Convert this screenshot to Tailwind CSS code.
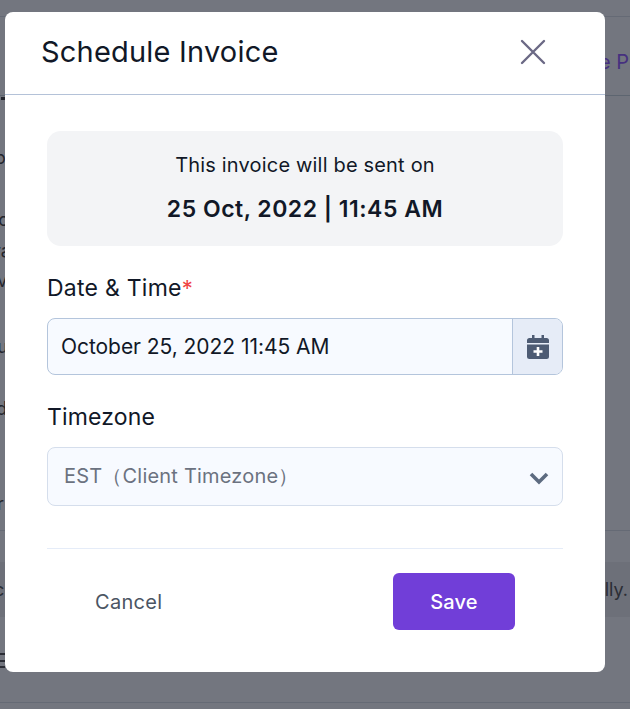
<!DOCTYPE html>
<html lang="en">
<head>
  <meta charset="UTF-8" />
  <title>Schedule Invoice</title>
  <script src="https://cdn.jsdelivr.net/npm/@tailwindcss/browser@4"></script>
</head>
<body class="relative h-[709px] w-[630px] overflow-hidden bg-[#73767f] font-['Inter',sans-serif]">
  <!-- page behind the overlay -->
  <div class="h-[709px] w-[630px] text-[18px] text-[#23252d]">
    <div class="h-[17px] border-b border-[#656a75]"></div>
    <div class="flex h-[79px] items-center justify-end border-b border-[#5d6570] pt-[12px] text-[20px] text-[#46307f]"><span class="mr-px">e P</span></div>
    <div class="relative">
      <i class="absolute left-px top-px h-[3px] w-[4px] bg-[#23252d]"></i>
      <span class="absolute -left-[5px] top-[48px]">oc</span>
      <span class="absolute -left-[6px] top-[110px]">lo</span>
      <span class="absolute -left-[6px] top-[141px]">ra</span>
      <span class="absolute -left-[7px] top-[171px]">iv</span>
      <span class="absolute -left-[7px] top-[237px]">iu</span>
      <span class="absolute -left-[8px] top-[299px]">id</span>
      <span class="absolute -left-[3px] top-[394px]">r</span>
    </div>
    <div class="h-[435px] border-b border-[#656a75]"></div>
    <div class="mt-[31px] flex h-[55px] items-center justify-between bg-[#6d7079] text-[#2b2d35]"><span class="-ml-[6px]">c</span><span class="mr-[2px]">lly.</span></div>
    <div class="mt-[36px] flex h-[15px] w-[5px] flex-col justify-between"><i class="h-[2px] bg-[#2b2d35]"></i><i class="h-[2px] bg-[#2b2d35]"></i><i class="h-[2px] bg-[#2b2d35]"></i></div>
    <div class="mt-[34px] border-b border-[#656a75]"></div>
  </div>

  <!-- modal -->
  <div class="absolute left-[5px] top-[12px] h-[660px] w-[600px] rounded-[8px] bg-white">
    <div class="flex h-[83px] items-center justify-between border-b border-[#b4c2d8] pb-[2px] pl-[36px] pr-[59px]">
      <h2 class="text-[29px] tracking-[0.2px] text-[#111827]">Schedule Invoice</h2>
      <svg class="h-[26px] w-[26px]" viewBox="0 0 26 26" fill="none" stroke="#6b6985" stroke-width="2.4" stroke-linecap="round"><path d="M2 2l22 22M24 2L2 24"/></svg>
    </div>
    <div class="px-[42px] pt-[36px]">
      <div class="flex h-[115px] flex-col items-center rounded-[14px] bg-[#f3f4f6] pt-[21px] text-[#111827]">
        <p class="text-[20px] leading-[26px] tracking-[0.18px]">This invoice will be sent on</p>
        <p class="mt-[17px] text-[23px] font-semibold leading-[28px] tracking-[0.5px]">25 Oct, 2022 | 11:45 AM</p>
      </div>
      <label class="mt-[27px] block h-[30px] text-[23px] leading-[30px] tracking-[0.25px] text-[#111827]">Date &amp; Time<span class="text-[22px] leading-none text-[#ef4444]">*</span></label>
      <div class="mt-[15px] flex h-[57px] overflow-hidden rounded-[8px] border border-[#b4c5dc] bg-[#f7faff]">
        <div class="flex flex-1 items-center pl-[13px] text-[21px] tracking-[-0.05px] text-[#111827]">October 25, 2022 11:45 AM</div>
        <div class="flex w-[50px] items-center justify-center border-l border-[#b4c5dc] bg-[#e6ecf7]">
          <svg class="h-[24px] w-[22px]" viewBox="0 0 22 24" fill="#4d5b73"><path d="M5 0h2.500v3h7V0H17v3h2.500A2.500 2.500 0 0 1 22 5.500V8H0V5.500A2.500 2.500 0 0 1 2.500 3H5zM0 9.500h22v12a2.500 2.500 0 0 1-2.500 2.500h-17A2.500 2.500 0 0 1 0 21.500z"/><path fill="#fff" d="M9.700 12h2.600v3.200h3.200v2.600h-3.200V21H9.700v-3.200H6.500v-2.600h3.200z"/></svg>
        </div>
      </div>
      <label class="mt-[27px] block h-[30px] text-[23px] leading-[30px] tracking-[0.15px] text-[#111827]">Timezone</label>
      <div class="mt-[15px] flex h-[59px] items-center justify-between rounded-[8px] border border-[#d5deec] bg-[#f7faff] pl-[16px] pr-[13px] text-[20px] text-[#6b7280]">
        <span class="-mt-[1px] tracking-[0.2px]">EST（Client Timezone）</span>
        <svg class="mt-[2px] h-[14px] w-[20px]" viewBox="0 0 20 14" fill="none" stroke="#5d6b80" stroke-width="3.600"><path d="M2 3l8 8 8-8"/></svg>
      </div>
      <div class="mt-[42px] border-t border-[#e5ecf8]"></div>
      <div class="mt-[24px] flex items-center justify-between pl-[48px] pr-[48px]">
        <button class="text-[20px] tracking-[0.3px] text-[#4b5563]">Cancel</button>
        <button class="h-[57px] w-[122px] rounded-[6px] bg-[#713ed8] text-[20px] font-medium tracking-[0.2px] text-white">Save</button>
      </div>
    </div>
  </div>
</body>
</html>
